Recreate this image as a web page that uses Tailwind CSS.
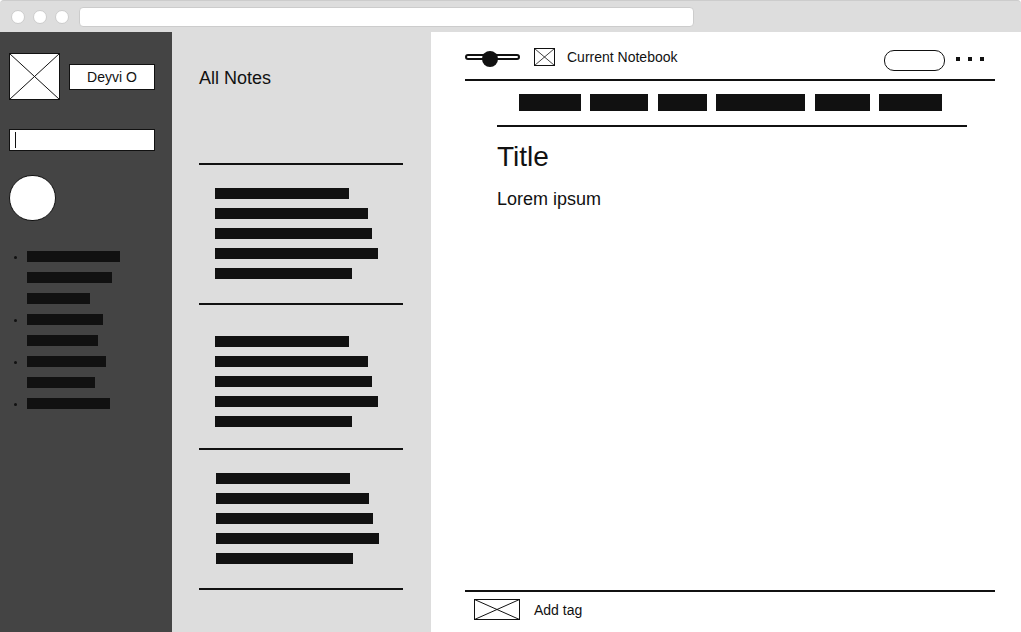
<!DOCTYPE html>
<html lang="en">
<head>
<meta charset="utf-8">
<meta name="viewport" content="width=device-width, initial-scale=1">
<title>All Notes</title>
<script src="https://cdn.jsdelivr.net/npm/@tailwindcss/browser@4"></script>
</head>
<body class="flex min-h-screen flex-col bg-white font-['Liberation_Sans',Arial,sans-serif] text-[#111]">

  <!-- Browser chrome -->
  <header class="flex h-8 items-center gap-2 rounded-t border-t border-[#ccc] bg-[#ddd] pl-[11px] pr-4">
    <span class="size-3.5 shrink-0 rounded-full border border-[#ccc] bg-white"></span>
    <span class="size-3.5 shrink-0 rounded-full border border-[#ccc] bg-white"></span>
    <span class="size-3.5 shrink-0 rounded-full border border-[#ccc] bg-white"></span>
    <input type="text" aria-label="Address" class="ml-0.5 h-5 w-full max-w-[615px] rounded border border-[#ccc] bg-white px-2 text-xs outline-none">
  </header>

  <div class="flex flex-1">

    <!-- Sidebar -->
    <aside class="w-[172px] shrink-0 bg-[#444] pl-[9px] pr-[17px] pt-[21px]">
      <div class="flex items-center gap-[9px]">
        <svg class="h-[47px] w-[51px] shrink-0" viewBox="0 0 51 47" fill="#fff" stroke="#111" role="img" aria-label="Avatar">
          <rect x="0.5" y="0.5" width="50" height="46"/>
          <path d="M0.5 0.5L50.5 46.5M50.5 0.5L0.5 46.5"/>
        </svg>
        <button type="button" class="h-[26px] flex-1 border border-[#111] bg-white text-sm leading-6">Deyvi O</button>
      </div>

      <div class="relative mt-[29px]">
        <input type="text" aria-label="Search" class="block h-[22px] w-full border border-[#111] bg-white px-1.5 text-sm outline-none">
        <span class="absolute left-1.5 top-[3px] h-4 w-px bg-[#111]"></span>
      </div>

      <button type="button" aria-label="New note" class="mt-6 block h-[46px] w-[47px] rounded-full border border-[#111] bg-white"></button>

      <ul class="mt-[30px] space-y-2.5 pl-[5px]">
        <li class="flex gap-2.5">
          <span class="mt-[5px] size-[3px] rounded-full bg-[#111]"></span>
          <div class="space-y-2.5">
            <div class="h-[11px] w-[93px] bg-[#111]"></div>
            <div class="h-[11px] w-[85px] bg-[#111]"></div>
            <div class="h-[11px] w-[63px] bg-[#111]"></div>
          </div>
        </li>
        <li class="flex gap-2.5">
          <span class="mt-[5px] size-[3px] rounded-full bg-[#111]"></span>
          <div class="space-y-2.5">
            <div class="h-[11px] w-[76px] bg-[#111]"></div>
            <div class="h-[11px] w-[71px] bg-[#111]"></div>
          </div>
        </li>
        <li class="flex gap-2.5">
          <span class="mt-[5px] size-[3px] rounded-full bg-[#111]"></span>
          <div class="space-y-2.5">
            <div class="h-[11px] w-[79px] bg-[#111]"></div>
            <div class="h-[11px] w-[68px] bg-[#111]"></div>
          </div>
        </li>
        <li class="flex gap-2.5">
          <span class="mt-[5px] size-[3px] rounded-full bg-[#111]"></span>
          <div class="h-[11px] w-[83px] bg-[#111]"></div>
        </li>
      </ul>
    </aside>

    <!-- Note list -->
    <section class="w-[259px] shrink-0 bg-[#ddd] pl-[27px] pr-7 pt-8">
      <h2 class="text-lg leading-7">All Notes</h2>
      <div class="mt-[71px] border-t-2 border-[#111]">
        <article class="space-y-[9px] border-b-2 border-[#111] pb-6 pl-4 pt-[23px]">
          <div class="h-[11px] w-[134px] bg-[#111]"></div>
          <div class="h-[11px] w-[153px] bg-[#111]"></div>
          <div class="h-[11px] w-[157px] bg-[#111]"></div>
          <div class="h-[11px] w-[163px] bg-[#111]"></div>
          <div class="h-[11px] w-[137px] bg-[#111]"></div>
        </article>
        <article class="space-y-[9px] border-b-2 border-[#111] pb-[21px] pl-4 pt-[31px]">
          <div class="h-[11px] w-[134px] bg-[#111]"></div>
          <div class="h-[11px] w-[153px] bg-[#111]"></div>
          <div class="h-[11px] w-[157px] bg-[#111]"></div>
          <div class="h-[11px] w-[163px] bg-[#111]"></div>
          <div class="h-[11px] w-[137px] bg-[#111]"></div>
        </article>
        <article class="space-y-[9px] border-b-2 border-[#111] pb-6 pl-[17px] pt-[23px]">
          <div class="h-[11px] w-[134px] bg-[#111]"></div>
          <div class="h-[11px] w-[153px] bg-[#111]"></div>
          <div class="h-[11px] w-[157px] bg-[#111]"></div>
          <div class="h-[11px] w-[163px] bg-[#111]"></div>
          <div class="h-[11px] w-[137px] bg-[#111]"></div>
        </article>
      </div>
    </section>

    <!-- Editor -->
    <main class="flex min-w-0 flex-1 flex-col pl-[34px] pr-[26px]">
      <div class="flex h-[49px] items-start justify-between border-b-2 border-[#111]">
        <div class="flex items-center gap-3.5 pt-[15px]">
          <input type="range" min="0" max="100" value="43" aria-label="View" class="h-[18px] w-[55px] appearance-none bg-transparent [&::-webkit-slider-runnable-track]:box-border [&::-webkit-slider-runnable-track]:h-1.5 [&::-webkit-slider-runnable-track]:rounded-full [&::-webkit-slider-runnable-track]:border-2 [&::-webkit-slider-runnable-track]:border-[#111] [&::-webkit-slider-runnable-track]:bg-white [&::-webkit-slider-thumb]:-mt-[5px] [&::-webkit-slider-thumb]:size-4 [&::-webkit-slider-thumb]:appearance-none [&::-webkit-slider-thumb]:rounded-full [&::-webkit-slider-thumb]:bg-[#111]">
          <div class="flex items-center gap-3">
            <svg class="h-[18px] w-[21px] shrink-0" viewBox="0 0 21 18" fill="#fff" stroke="#111" aria-hidden="true">
              <rect x="0.5" y="0.5" width="20" height="17"/>
              <path d="M0.5 0.5L20.5 17.5M20.5 0.5L0.5 17.5" stroke-width="0.8"/>
            </svg>
            <span class="text-sm leading-5">Current Notebook</span>
          </div>
        </div>
        <div class="flex items-start gap-2.5 pr-2.5 pt-[18px]">
          <button type="button" aria-label="Share" class="h-[21px] w-[61px] rounded-[10px] border border-[#111] bg-white"></button>
          <button type="button" aria-label="More options" class="pt-[7px]">
            <svg class="h-1 w-[30px]" viewBox="0 0 30 4" fill="#111" aria-hidden="true">
              <path d="M1 0h4v4h-4zM13 0h4v4h-4zM25 0h4v4h-4z"/>
            </svg>
          </button>
        </div>
      </div>

      <div class="ml-8 mr-7 flex-1">
        <div class="flex justify-between border-b-2 border-[#111] pb-3.5 pl-[22px] pr-[25px] pt-[13px]">
          <div class="h-[17px] w-[62px] bg-[#111]"></div>
          <div class="h-[17px] w-[58px] bg-[#111]"></div>
          <div class="h-[17px] w-[49px] bg-[#111]"></div>
          <div class="h-[17px] w-[89px] bg-[#111]"></div>
          <div class="h-[17px] w-[55px] bg-[#111]"></div>
          <div class="h-[17px] w-[63px] bg-[#111]"></div>
        </div>
        <h1 class="mt-3 text-[28px] leading-9">Title</h1>
        <p class="mt-2.5 text-lg leading-7">Lorem ipsum</p>
      </div>

      <footer class="border-t-2 border-[#111] pb-3 pl-[9px] pt-[7px]">
        <button type="button" class="flex items-center gap-3.5 text-sm leading-5">
          <svg class="h-[21px] w-[46px]" viewBox="0 0 46 21" fill="#fff" stroke="#111" aria-hidden="true">
            <rect x="0.5" y="0.5" width="45" height="20"/>
            <path d="M0.5 0.5L45.5 20.5M45.5 0.5L0.5 20.5"/>
          </svg>
          Add tag
        </button>
      </footer>
    </main>
  </div>
</body>
</html>
